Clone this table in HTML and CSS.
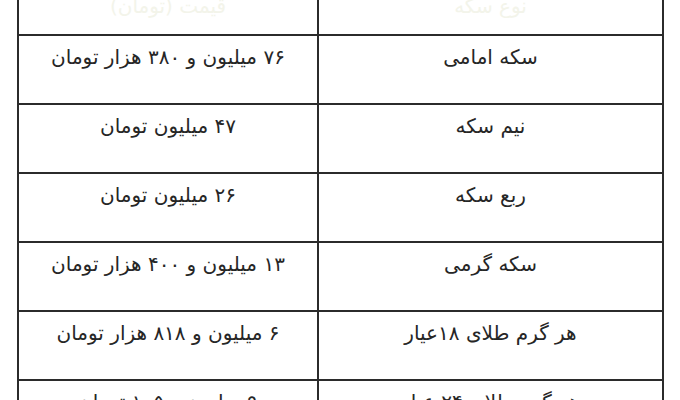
FILE: index.html
```html
<!DOCTYPE html>
<html lang="fa" dir="rtl">
<head>
<meta charset="utf-8">
<link rel="stylesheet" href="styles.css">
</head>
<body>
<table class="prices">
  <tr class="head">
    <td class="name">نوع سکه</td>
    <td class="price">قیمت (تومان)</td>
  </tr>
  <tr>
    <td class="name">سکه امامی</td>
    <td class="price">۷۶ میلیون و ۳۸۰ هزار تومان</td>
  </tr>
  <tr>
    <td class="name">نیم سکه</td>
    <td class="price">۴۷ میلیون تومان</td>
  </tr>
  <tr>
    <td class="name">ربع سکه</td>
    <td class="price">۲۶ میلیون تومان</td>
  </tr>
  <tr>
    <td class="name">سکه گرمی</td>
    <td class="price">۱۳ میلیون و ۴۰۰ هزار تومان</td>
  </tr>
  <tr>
    <td class="name">هر گرم طلای ۱۸عیار</td>
    <td class="price">۶ میلیون و ۸۱۸ هزار تومان</td>
  </tr>
  <tr>
    <td class="name">هر گرم طلای ۲۴ عیار</td>
    <td class="price">۹ میلیون و ۱۰۵ تومان</td>
  </tr>
</table>
</body>
</html>
```
FILE: styles.css
```css
html, body {
  margin: 0;
  padding: 0;
  background: #ffffff;
  overflow: hidden;
}
body {
  font-family: "DejaVu Sans", "Noto Sans", sans-serif;
  color: #262626;
}
.prices {
  border-collapse: collapse;
  margin: -2px 16px 0 0;
  width: 645px;
  table-layout: fixed;
}
.prices td {
  border: 2px solid #2b2b2b;
  padding: 7px 0 0 0;
  box-sizing: border-box;
  vertical-align: top;
  text-align: center;
  font-size: 20px;
  line-height: 28px;
  height: 69px;
}
.prices .name {
  width: 345px;
}
.prices .price {
  width: 300px;
}
.prices .head td {
  height: 36px;
  padding-top: 0;
  line-height: 12px;
  color: #f3f4ea;
}
```
